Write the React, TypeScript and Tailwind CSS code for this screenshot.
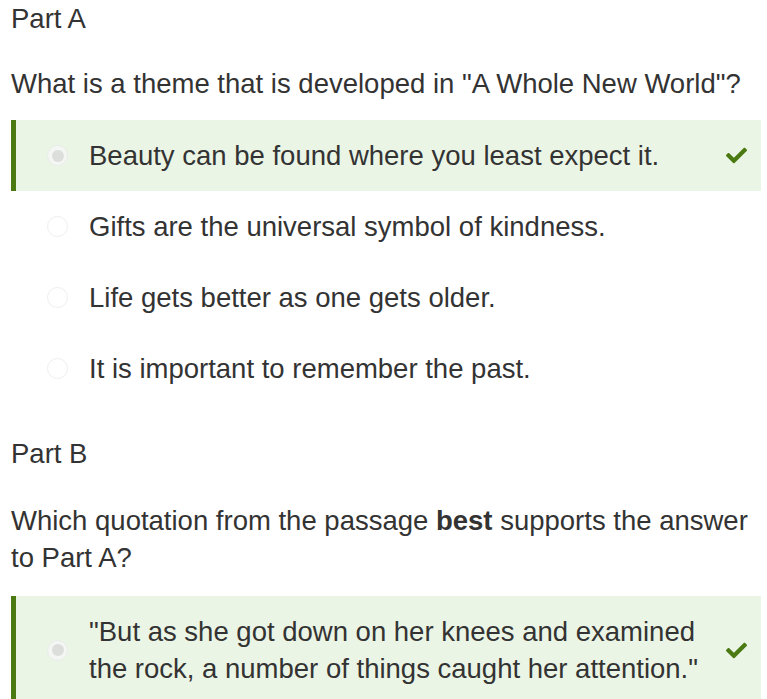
import { FaCheck } from 'react-icons/fa';

type Option = { text: React.ReactNode; selected?: boolean };

const partA: Option[] = [
  { text: 'Beauty can be found where you least expect it.', selected: true },
  { text: 'Gifts are the universal symbol of kindness.' },
  { text: 'Life gets better as one gets older.' },
  { text: 'It is important to remember the past.' },
];

function Radio({ selected }: { selected?: boolean }) {
  return (
    <span
      className={`flex h-[21px] w-[21px] shrink-0 items-center justify-center rounded-full border ${
        selected ? 'border-[#e9ece8] bg-[#f4f6f3]' : 'border-[#eeeeee] bg-white'
      }`}
    >
      {selected && <span className="h-[12px] w-[12px] rounded-full bg-[#dcdedb]" />}
    </span>
  );
}

function OptionRow({ option, tall }: { option: Option; tall?: boolean }) {
  return (
    <div
      className={`flex items-center border-l-[5px] pl-[31px] pr-[14px] ${
        option.selected ? 'border-[#4b7a12] bg-[#ebf5e5]' : 'border-transparent'
      } ${tall ? 'py-[17px]' : 'h-[71px]'}`}
    >
      <Radio selected={option.selected} />
      <div className="ml-[21px] flex-1">{option.text}</div>
      {option.selected && <FaCheck className="ml-4 shrink-0 text-[#4b7a12]" size={21} />}
    </div>
  );
}

export default function App() {
  return (
    <div
      className="w-[767px] bg-white pl-[11px] pr-[6px] text-[27.5px] leading-[37px] text-[#333333]"
      style={{ fontFamily: '"Liberation Sans", Arial, sans-serif' }}
    >
      <div>Part A</div>
      <div className="mt-[28px]">What is a theme that is developed in "A Whole New World"?</div>
      <div className="mt-[18px]">
        {partA.map((o, i) => (
          <OptionRow key={i} option={o} />
        ))}
      </div>

      <div className="mt-[31px]">Part B</div>
      <div className="mt-[30px]">
        Which quotation from the passage <b className="font-bold">best</b> supports the answer to Part A?
      </div>
      <div className="mt-[20px]">
        <OptionRow
          tall
          option={{
            selected: true,
            text: '"But as she got down on her knees and examined the rock, a number of things caught her attention."',
          }}
        />
      </div>
    </div>
  );
}
